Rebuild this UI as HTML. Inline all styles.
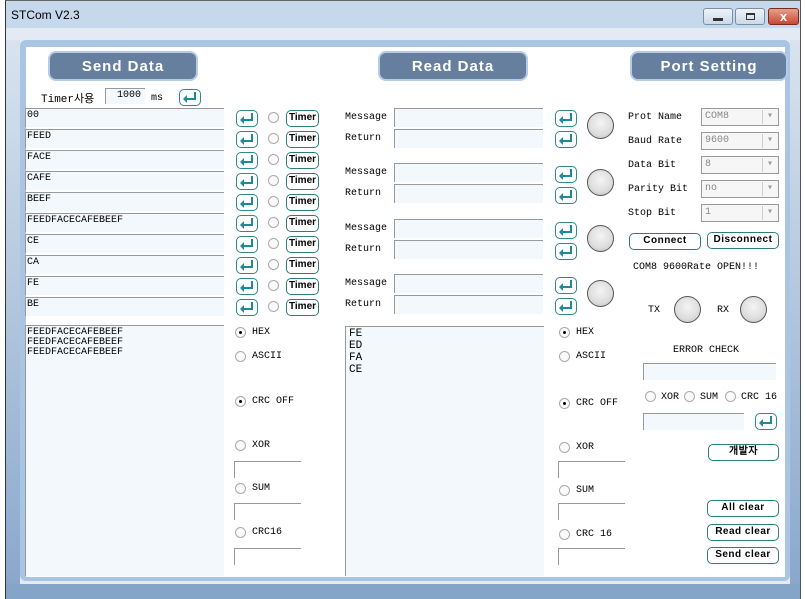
<!DOCTYPE html><html><head><meta charset="utf-8"><style>
*{box-sizing:border-box}
body{margin:0;width:806px;height:599px;overflow:hidden;background:#fff;font-family:"Liberation Mono","Noto Sans CJK KR",monospace;font-size:10px;color:#000;position:relative}
div,span{position:absolute}
.t{white-space:nowrap}
.hdr{background:#667f9e;border:2px solid #b6cbe6;border-radius:8px;color:#fff;font-family:"Liberation Sans",sans-serif;font-weight:bold;font-size:15px;text-align:center;line-height:27px;letter-spacing:1px;height:30px}
.in{background:#f3f8fc;border-left:1px solid #999;border-top:1px solid #999;height:19px;padding-left:1px;padding-top:1px;line-height:12px;font-size:10px}
.en{width:22px;height:17px;border:1.5px solid #2e8a86;border-radius:5px;background:#fff}
.en:after{content:"";position:absolute;left:6px;top:2px;width:8px;height:6px;border-right:2px solid #1e8a98;border-bottom:2px solid #1e8a98}
.en:before{content:"";position:absolute;left:3px;top:5px;border:4px solid transparent;border-right:4px solid #1e8a98;border-left:0}
.rd{width:11px;height:11px;border:1px solid #aaa;border-radius:50%;background:#fafafa}
.rd.on:after{content:"";position:absolute;left:3px;top:3px;width:3px;height:3px;border-radius:50%;background:#000}
.tm{width:33px;height:17px;border:1.5px solid #2e7c7a;border-radius:5px;background:#fff;font-family:"Liberation Sans",sans-serif;font-weight:bold;font-size:10px;text-align:center;line-height:14px}
.led{width:27px;height:27px;border-radius:50%;border:1.5px solid #555;background:radial-gradient(circle at 50% 40%,#f4f4f4,#ddd 60%,#bbb)}
.bt{height:17px;border:1.5px solid #2e7c7a;border-radius:5px;background:#fff;font-family:"Liberation Sans",sans-serif;font-weight:bold;font-size:10px;text-align:center;line-height:14px;letter-spacing:.5px}
.sel{width:78px;height:18px;border:1px solid #999;background:#f6f6f6;color:#888;padding-left:3px;line-height:16px}
.sel:after{content:"▾";position:absolute;right:1px;top:1px;width:14px;height:14px;border-left:1px solid #ccc;color:#999;text-align:center;line-height:14px;font-size:10px}
.ln{border-top:1px solid #999;border-left:1px solid #999;background:#fff}
</style></head><body>
<div style="left:5px;top:0;width:796px;height:599px;background:linear-gradient(#c6d8ec,#b7cbe2);border-left:1px solid #333;border-top:1px solid #666;border-right:1px solid #555"></div>
<div style="left:6px;top:28px;width:794px;height:571px;background:#e3eaf3"></div>
<div class="t" style="left:11px;top:8px;font-family:'Liberation Sans',sans-serif;font-size:12px">STCom V2.3</div>
<div style="left:703px;top:8px;width:30px;height:17px;border:1px solid #7a8ea8;border-radius:3px;background:linear-gradient(#eef3f9,#cdd9e8)"><span style="left:9px;top:9px;width:10px;height:3px;background:#333"></span></div>
<div style="left:735px;top:8px;width:30px;height:17px;border:1px solid #7a8ea8;border-radius:3px;background:linear-gradient(#eef3f9,#cdd9e8)"><span style="left:10px;top:4px;width:9px;height:7px;border:1px solid #333;border-top-width:2px"></span></div>
<div style="left:768px;top:8px;width:31px;height:17px;border:1px solid #7a2a1a;border-radius:3px;background:linear-gradient(#e8a090,#c84a30);color:#fff;font-weight:bold;font-size:13px;text-align:center;line-height:15px;font-family:'Liberation Sans',sans-serif">x</div>
<div style="left:20px;top:40px;width:770px;height:541px;background:#aac5e4;border-radius:6px"></div>
<div style="left:26px;top:47px;width:759px;height:530px;background:#fff"></div>
<div style="left:6px;top:584px;width:794px;height:15px;background:#84a4c8"></div>
<div style="left:6px;top:40px;width:14px;height:544px;background:linear-gradient(#d8e3ef,#8aa8cc)"></div>
<div style="left:790px;top:40px;width:10px;height:544px;background:linear-gradient(#d8e3ef,#8aa8cc)"></div>

<div class="hdr" style="left:48px;top:51px;width:150px">Send Data</div>
<div class="hdr" style="left:378px;top:51px;width:150px">Read Data</div>
<div class="hdr" style="left:630px;top:51px;width:158px">Port Setting</div>

<div class="t" style="left:41px;top:90px;font-size:11px">Timer사용</div>
<div class="in" style="left:105px;top:88px;width:40px;height:16px;text-align:right;padding-right:4px">1000</div>
<div class="t" style="left:151px;top:93px">ms</div>
<div class="en" style="left:179px;top:89px"></div>

<div class="in" style="left:25px;top:108px;width:199px">00</div>
<div class="in" style="left:25px;top:129px;width:199px">FEED</div>
<div class="in" style="left:25px;top:150px;width:199px">FACE</div>
<div class="in" style="left:25px;top:171px;width:199px">CAFE</div>
<div class="in" style="left:25px;top:192px;width:199px">BEEF</div>
<div class="in" style="left:25px;top:213px;width:199px">FEEDFACECAFEBEEF</div>
<div class="in" style="left:25px;top:234px;width:199px">CE</div>
<div class="in" style="left:25px;top:255px;width:199px">CA</div>
<div class="in" style="left:25px;top:276px;width:199px">FE</div>
<div class="in" style="left:25px;top:297px;width:199px">BE</div>

<div class="en" style="left:236px;top:110px"></div><div class="rd" style="left:268px;top:112px"></div><div class="tm" style="left:286px;top:110px">Timer</div>
<div class="en" style="left:236px;top:131px"></div><div class="rd" style="left:268px;top:133px"></div><div class="tm" style="left:286px;top:131px">Timer</div>
<div class="en" style="left:236px;top:152px"></div><div class="rd" style="left:268px;top:154px"></div><div class="tm" style="left:286px;top:152px">Timer</div>
<div class="en" style="left:236px;top:173px"></div><div class="rd" style="left:268px;top:175px"></div><div class="tm" style="left:286px;top:173px">Timer</div>
<div class="en" style="left:236px;top:194px"></div><div class="rd" style="left:268px;top:196px"></div><div class="tm" style="left:286px;top:194px">Timer</div>
<div class="en" style="left:236px;top:215px"></div><div class="rd" style="left:268px;top:217px"></div><div class="tm" style="left:286px;top:215px">Timer</div>
<div class="en" style="left:236px;top:236px"></div><div class="rd" style="left:268px;top:238px"></div><div class="tm" style="left:286px;top:236px">Timer</div>
<div class="en" style="left:236px;top:257px"></div><div class="rd" style="left:268px;top:259px"></div><div class="tm" style="left:286px;top:257px">Timer</div>
<div class="en" style="left:236px;top:278px"></div><div class="rd" style="left:268px;top:280px"></div><div class="tm" style="left:286px;top:278px">Timer</div>
<div class="en" style="left:236px;top:299px"></div><div class="rd" style="left:268px;top:301px"></div><div class="tm" style="left:286px;top:299px">Timer</div>

<div class="in" style="left:25px;top:325px;width:199px;height:251px;line-height:10px;padding-top:2px">FEEDFACECAFEBEEF<br>FEEDFACECAFEBEEF<br>FEEDFACECAFEBEEF</div>

<div class="rd on" style="left:235px;top:327px"></div><div class="t" style="left:252px;top:327px">HEX</div>
<div class="rd" style="left:235px;top:351px"></div><div class="t" style="left:252px;top:351px">ASCII</div>
<div class="rd on" style="left:235px;top:396px"></div><div class="t" style="left:252px;top:396px">CRC OFF</div>
<div class="rd" style="left:235px;top:440px"></div><div class="t" style="left:252px;top:440px">XOR</div>
<div class="ln" style="left:234px;top:461px;width:67px;height:17px"></div>
<div class="rd" style="left:235px;top:483px"></div><div class="t" style="left:252px;top:483px">SUM</div>
<div class="ln" style="left:234px;top:503px;width:67px;height:17px"></div>
<div class="rd" style="left:235px;top:527px"></div><div class="t" style="left:252px;top:527px">CRC16</div>
<div class="ln" style="left:234px;top:548px;width:67px;height:17px"></div>

<div class="t" style="left:345px;top:112px">Message</div><div class="in" style="left:394px;top:108px;width:149px"></div>
<div class="t" style="left:345px;top:133px">Return</div><div class="in" style="left:394px;top:129px;width:149px"></div>
<div class="en" style="left:555px;top:110px"></div><div class="en" style="left:555px;top:131px"></div><div class="led" style="left:587px;top:112px"></div>
<div class="t" style="left:345px;top:167px">Message</div><div class="in" style="left:394px;top:163px;width:149px"></div>
<div class="t" style="left:345px;top:188px">Return</div><div class="in" style="left:394px;top:184px;width:149px"></div>
<div class="en" style="left:555px;top:166px"></div><div class="en" style="left:555px;top:187px"></div><div class="led" style="left:587px;top:169px"></div>
<div class="t" style="left:345px;top:223px">Message</div><div class="in" style="left:394px;top:219px;width:149px"></div>
<div class="t" style="left:345px;top:244px">Return</div><div class="in" style="left:394px;top:240px;width:149px"></div>
<div class="en" style="left:555px;top:222px"></div><div class="en" style="left:555px;top:243px"></div><div class="led" style="left:587px;top:225px"></div>
<div class="t" style="left:345px;top:278px">Message</div><div class="in" style="left:394px;top:274px;width:149px"></div>
<div class="t" style="left:345px;top:299px">Return</div><div class="in" style="left:394px;top:295px;width:149px"></div>
<div class="en" style="left:555px;top:277px"></div><div class="en" style="left:555px;top:298px"></div><div class="led" style="left:587px;top:280px"></div>

<div class="in" style="left:345px;top:326px;width:199px;height:250px;line-height:12px;padding-top:1px;padding-left:3px;font-size:11px">FE<br>ED<br>FA<br>CE</div>

<div class="rd on" style="left:559px;top:327px"></div><div class="t" style="left:576px;top:327px">HEX</div>
<div class="rd" style="left:559px;top:351px"></div><div class="t" style="left:576px;top:351px">ASCII</div>
<div class="rd on" style="left:559px;top:398px"></div><div class="t" style="left:576px;top:398px">CRC OFF</div>
<div class="rd" style="left:559px;top:442px"></div><div class="t" style="left:576px;top:442px">XOR</div>
<div class="ln" style="left:558px;top:461px;width:67px;height:17px"></div>
<div class="rd" style="left:559px;top:485px"></div><div class="t" style="left:576px;top:485px">SUM</div>
<div class="ln" style="left:558px;top:503px;width:67px;height:17px"></div>
<div class="rd" style="left:559px;top:529px"></div><div class="t" style="left:576px;top:529px">CRC 16</div>
<div class="ln" style="left:558px;top:548px;width:67px;height:17px"></div>

<div class="t" style="left:628px;top:112px">Prot Name</div><div class="sel" style="left:701px;top:108px">COM8</div>
<div class="t" style="left:628px;top:136px">Baud Rate</div><div class="sel" style="left:701px;top:132px">9600</div>
<div class="t" style="left:628px;top:160px">Data Bit</div><div class="sel" style="left:701px;top:156px">8</div>
<div class="t" style="left:628px;top:184px">Parity Bit</div><div class="sel" style="left:701px;top:180px">no</div>
<div class="t" style="left:628px;top:208px">Stop Bit</div><div class="sel" style="left:701px;top:204px">1</div>
<div class="bt" style="left:629px;top:233px;width:72px">Connect</div>
<div class="bt" style="left:707px;top:232px;width:72px">Disconnect</div>
<div class="t" style="left:633px;top:262px">COM8 9600Rate OPEN!!!</div>
<div class="t" style="left:648px;top:305px">TX</div><div class="led" style="left:674px;top:296px"></div>
<div class="t" style="left:717px;top:305px">RX</div><div class="led" style="left:740px;top:296px"></div>
<div class="t" style="left:673px;top:345px">ERROR CHECK</div>
<div class="in" style="left:643px;top:363px;width:133px;height:17px"></div>
<div class="rd" style="left:645px;top:391px"></div><div class="t" style="left:661px;top:392px">XOR</div>
<div class="rd" style="left:684px;top:391px"></div><div class="t" style="left:700px;top:392px">SUM</div>
<div class="rd" style="left:725px;top:391px"></div><div class="t" style="left:741px;top:392px">CRC 16</div>
<div class="in" style="left:643px;top:413px;width:101px;height:17px"></div>
<div class="en" style="left:755px;top:413px"></div>
<div class="bt" style="left:708px;top:444px;width:71px">개발자</div>
<div class="bt" style="left:707px;top:500px;width:72px">All clear</div>
<div class="bt" style="left:707px;top:524px;width:72px">Read clear</div>
<div class="bt" style="left:707px;top:547px;width:72px">Send clear</div>
</body></html>
